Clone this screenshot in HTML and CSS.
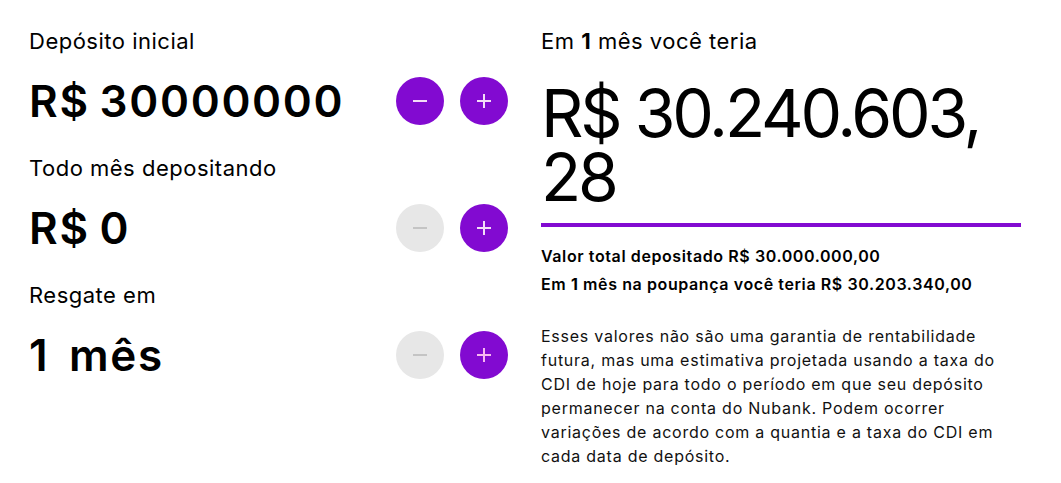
FILE: index.html
```html
<!DOCTYPE html>
<html lang="pt-BR">
<head>
<meta charset="utf-8">
<title>Simulador</title>
<link rel="stylesheet" href="styles.css">
</head>
<body>
<main class="sim">
  <section class="inputs">
    <div class="field">
      <div class="label">Depósito inicial</div>
      <div class="row">
        <div class="value">R$ 30000000</div>
        <div class="btns">
          <button class="btn" aria-label="Diminuir"><span class="minus"></span></button>
          <button class="btn" aria-label="Aumentar"><span class="plus"></span></button>
        </div>
      </div>
    </div>
    <div class="field">
      <div class="label">Todo mês depositando</div>
      <div class="row">
        <div class="value">R$ 0</div>
        <div class="btns">
          <button class="btn off" aria-label="Diminuir"><span class="minus"></span></button>
          <button class="btn" aria-label="Aumentar"><span class="plus"></span></button>
        </div>
      </div>
    </div>
    <div class="field">
      <div class="label">Resgate em</div>
      <div class="row">
        <div class="value months">1&nbsp;&nbsp;mês</div>
        <div class="btns">
          <button class="btn off" aria-label="Diminuir"><span class="minus"></span></button>
          <button class="btn hover" aria-label="Aumentar"><span class="plus"></span></button>
        </div>
      </div>
    </div>
  </section>
  <section class="result">
    <div class="label">Em <b class="one">1</b> mês você teria</div>
    <div class="total">R$ 30.240.603,<br>28</div>
    <div class="rule"></div>
    <p class="facts">Valor total depositado R$ 30.000.000,00<br>Em <b class="one">1</b> mês na poupança você teria R$ 30.203.340,00</p>
    <p class="note">Esses valores não são uma garantia de rentabilidade<br>futura, mas uma estimativa projetada usando a taxa do<br>CDI de hoje para todo o período em que seu depósito<br>permanecer na conta do Nubank. Podem ocorrer<br>variações de acordo com a quantia e a taxa do CDI em<br>cada data de depósito.</p>
  </section>
</main>
</body>
</html>
```

FILE: styles.css
```css
* { box-sizing: border-box; }
html, body { margin: 0; background: #fff; }
body {
  font-family: Inter, "Noto Sans", "DejaVu Sans", sans-serif;
  color: #000;
}
.sim {
  display: flex;
  gap: 33px;
  padding: 27px 40px 0 29px;
}
.inputs {
  width: 479px;
  display: flex;
  flex-direction: column;
  gap: 29px;
}
.field {
  display: flex;
  flex-direction: column;
  gap: 22px;
}
.label {
  font-size: 22px;
  line-height: 28px;
  font-weight: 400;
  letter-spacing: 0.5px;
}
.one { font-weight: 700; }
.row {
  display: flex;
  align-items: center;
  justify-content: space-between;
  height: 48px;
}
.value {
  font-size: 44px;
  line-height: 48px;
  font-weight: 600;
  letter-spacing: 1.7px;
  word-spacing: -3px;
}
.btns {
  display: flex;
  gap: 16px;
}
.btn {
  width: 48px;
  height: 48px;
  border-radius: 50%;
  border: 0;
  padding: 0;
  background: #820ad1;
  display: flex;
  align-items: center;
  justify-content: center;
}
.btn.off { background: #e7e7e7; }
.minus {
  width: 14px;
  height: 2px;
  background: #f3dcf7;
}
.plus {
  position: relative;
  width: 14px;
  height: 14px;
}
.plus::before, .plus::after {
  content: "";
  position: absolute;
  background: #f3dcf7;
}
.plus::before { left: 0; top: 6px; width: 14px; height: 2px; }
.plus::after { left: 6px; top: 0; width: 2px; height: 14px; }
.btn.off .minus { background: #c4c4c4; }
.btn.hover .plus::before, .btn.hover .plus::after { background: #f7b8f0; }

.result {
  width: 480px;
  display: flex;
  flex-direction: column;
}
.total {
  margin-top: 26px;
  font-size: 66px;
  line-height: 64px;
  font-weight: 400;
  letter-spacing: -3.2px;
}
.rule {
  margin-top: 14px;
  height: 4px;
  background: #820ad1;
}
.facts {
  margin: 15px 0 0;
  font-size: 16px;
  line-height: 28px;
  font-weight: 600;
  letter-spacing: 0.6px;
}
.note {
  margin: 26px 0 0;
  font-size: 16px;
  line-height: 24px;
  font-weight: 400;
  letter-spacing: 0.75px;
  white-space: nowrap;
  color: #111;
}
```
